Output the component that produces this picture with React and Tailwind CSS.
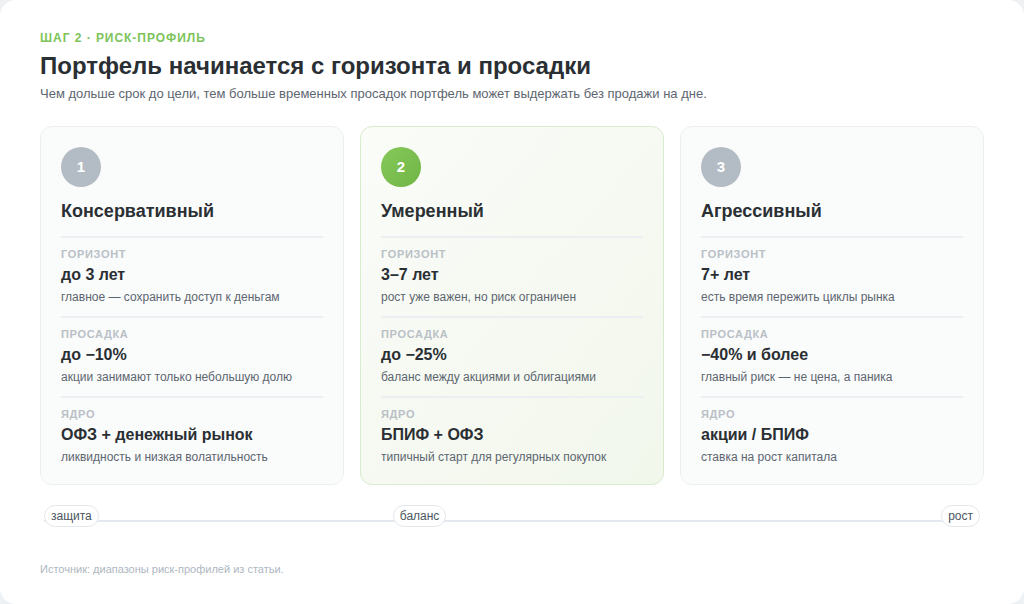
import React from 'react';

const profiles = [
    {
        n: 1, title: 'Консервативный', active: false,
        rows: [
            ['Горизонт', 'до 3 лет', 'главное — сохранить доступ к деньгам'],
            ['Просадка', 'до −10%', 'акции занимают только небольшую долю'],
            ['Ядро', 'ОФЗ + денежный рынок', 'ликвидность и низкая волатильность'],
        ],
    },
    {
        n: 2, title: 'Умеренный', active: true,
        rows: [
            ['Горизонт', '3–7 лет', 'рост уже важен, но риск ограничен'],
            ['Просадка', 'до −25%', 'баланс между акциями и облигациями'],
            ['Ядро', 'БПИФ + ОФЗ', 'типичный старт для регулярных покупок'],
        ],
    },
    {
        n: 3, title: 'Агрессивный', active: false,
        rows: [
            ['Горизонт', '7+ лет', 'есть время пережить циклы рынка'],
            ['Просадка', '−40% и более', 'главный риск — не цена, а паника'],
            ['Ядро', 'акции / БПИФ', 'ставка на рост капитала'],
        ],
    },
];

const Pill = ({ children, className = '' }) => (
    <span className={`relative z-10 bg-white border border-[#e3e8ec] rounded-full px-[6px] h-[22px] flex items-center text-[12px] text-[#4b5560] ${className}`}>
        {children}
    </span>
);

export default function App() {
    return (
        <div className="w-[1024px] h-[604px] bg-[#eef1f3] font-[Liberation_Sans,Arial,sans-serif]">
            <div className="w-full h-full bg-white rounded-[16px] px-[40px] pt-[31px]">
                <p className="text-[12px] font-bold tracking-[0.08em] text-[#7cc35a] leading-[14px]">ШАГ 2 · РИСК-ПРОФИЛЬ</p>
                <h1 className="mt-[6px] text-[24px] leading-[30px] font-bold text-[#2a2f33]">Портфель начинается с горизонта и просадки</h1>
                <p className="mt-[4px] text-[13px] leading-[18px] text-[#5d6670]">Чем дольше срок до цели, тем больше временных просадок портфель может выдержать без продажи на дне.</p>

                <div className="mt-[23px] grid grid-cols-3 gap-[16px]">
                    {profiles.map(p => (
                        <div
                            key={p.n}
                            className={`h-[359px] rounded-[12px] border px-[20px] pt-[20px] ${p.active ? 'border-[#d9ebcc] bg-gradient-to-br from-[#fafcf8] to-[#f2f7ec]' : 'border-[#eceff1] bg-[#fafbfb]'}`}
                        >
                            <div className={`w-[40px] h-[40px] rounded-full flex items-center justify-center text-white font-bold text-[15px] ${p.active ? 'bg-gradient-to-br from-[#86c95a] to-[#6fb544]' : 'bg-[#b3bcc4]'}`}>
                                {p.n}
                            </div>
                            <h2 className="mt-[13px] text-[18px] leading-[22px] font-bold text-[#2a2f33]">{p.title}</h2>
                            <div className="mt-[14px]">
                                {p.rows.map(([label, value, note], i) => (
                                    <div key={label} className={`border-t-2 border-[#eceff1] pt-[10px] ${i < 2 ? 'h-[80px]' : ''}`}>
                                        <p className="text-[11px] leading-[13px] font-bold uppercase tracking-[0.06em] text-[#b9c0c6]">{label}</p>
                                        <p className="mt-[4px] text-[16px] leading-[20px] font-bold text-[#2a2f33]">{value}</p>
                                        <p className="mt-[4px] text-[12px] leading-[16px] text-[#5d6670]">{note}</p>
                                    </div>
                                ))}
                            </div>
                        </div>
                    ))}
                </div>

                <div className="relative mt-[18px] h-[26px] flex items-center pl-[4px] pr-[4px]">
                    <div className="absolute left-[4px] right-[8px] top-[17px] h-[2px] bg-[#e3e9ee]" />
                    <div className="absolute right-[6px] top-[12px] w-0 h-0 border-y-[6px] border-y-transparent border-l-[7px] border-l-[#dfe6ec]" />
                    <Pill>защита</Pill>
                    <Pill className="ml-[294px]">баланс</Pill>
                    <div className="flex-1" />
                    <Pill>рост</Pill>
                </div>

                <p className="mt-[32px] text-[11px] text-[#aeb7bf]">Источник: диапазоны риск-профилей из статьи.</p>
            </div>
        </div>
    );
}
